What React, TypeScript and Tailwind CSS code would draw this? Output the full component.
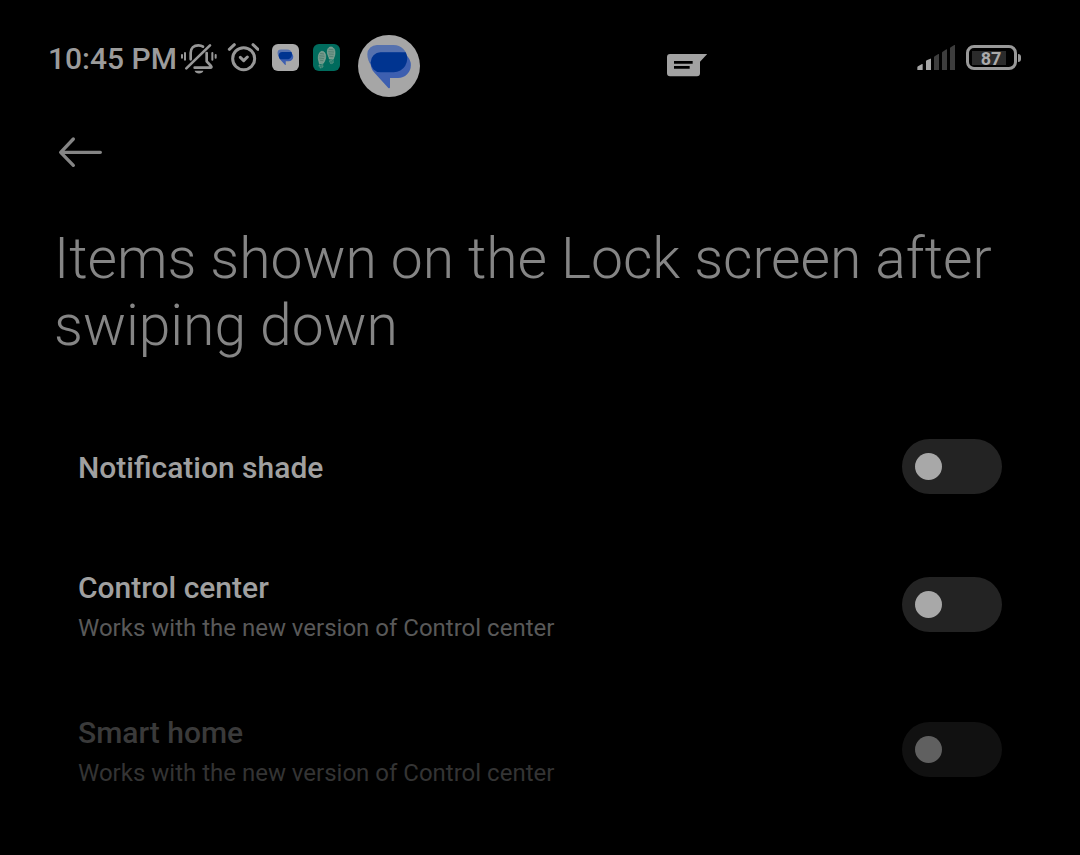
import React from "react";

type Setting = {
  id: string;
  label: string;
  description?: string;
  disabled?: boolean;
};

const settings: Setting[] = [
  { id: "notification-shade", label: "Notification shade" },
  {
    id: "control-center",
    label: "Control center",
    description: "Works with the new version of Control center",
  },
  {
    id: "smart-home",
    label: "Smart home",
    description: "Works with the new version of Control center",
    disabled: true,
  },
];

function VibrateMutedIcon() {
  return (
    <svg className="size-9" viewBox="9 3 108 108" fill="none" stroke="#979797" strokeWidth="8" strokeLinecap="round" strokeLinejoin="round" aria-hidden="true">
      <path d="M12 48v8M21 42v20M103 42v20M113 48v8" strokeWidth="6" />
      <path d="M38 61V42c0-15 10-23 23-23 6 0 10 1 14 4" />
      <path d="M86 42v25l13 14c3 4 1 5-2 5H50" />
      <path d="M25 88 96 19" />
      <path d="M50 95h26c-2 11-24 11-26 0z" fill="#979797" stroke="none" />
    </svg>
  );
}

function AlarmIcon() {
  return (
    <svg className="size-8" viewBox="22 51 96 96" fill="none" stroke="#979797" strokeWidth="9" strokeLinecap="round" strokeLinejoin="round" aria-hidden="true">
      <circle cx="72" cy="101" r="33" />
      <path d="m29 73 15-14M100 59l15 14M62 97l10 10 11-11" />
    </svg>
  );
}

function Bubble() {
  return (
    <>
      <path d="M66 38H115a41 41 0 0 1 0 82H76C54 114 36 90 36 66a29 28 0 0 1 30-28z" fill="#5571ae" />
      <path d="M77 60H128a38.500 38.500 0 0 1 0 77H104v28c0 3-2 4-5 2L56 120c-6-7-10-17-10-28a31 32 0 0 1 31-32z" fill="#3d5fb0" />
      <path d="M76 60H151A41 41 0 0 1 115 120H76a30 30 0 0 1 0-60z" fill="#003490" />
    </>
  );
}

function MessagesAppIcon() {
  return (
    <svg className="size-[27px] rounded-md bg-[#a9a9a9]" viewBox="-10 -7 224 224" aria-hidden="true">
      <Bubble />
    </svg>
  );
}

function FootstepsAppIcon() {
  return (
    <svg className="size-[27px] rounded-md bg-[#006b5d]" viewBox="279 57 81 81" fill="#72978a" stroke="#a6b8a7" strokeWidth="1.5" aria-hidden="true">
      <path d="M305 79c8-1 13 8 12 19-1 7-4 12-7 17l-12 1c-1-7-4-13-3-21 1-9 5-15 10-16z" />
      <path d="M331 66c9-1 14 7 14 17 0 9-3 13-5 20l-12-1c-1-7-6-13-6-21 0-9 3-14 9-15z" />
      <path d="M297 120l12-1c2 6-2 10-6 10s-7-4-6-9zM329 106l11 1c1 6-2 10-6 9-4 0-6-5-5-10z" fill="#337f70" strokeDasharray="3 2" />
      <path d="m300 85 12 2m-14 5 15 2m-15 5 14 2m-12 5 10 1M326 73l14 1m-15 6 17 1m-16 6 15 1m-13 6 12 1" stroke="#386f5f" fill="none" />
    </svg>
  );
}

function ChatIcon() {
  return (
    <svg className="h-6 w-10" viewBox="51 54 120 72" aria-hidden="true">
      <path d="M60 57h112l-22 23v35q0 9-9 9H60q-9 0-9-9V66q0-9 9-9z" fill="#a2a2a2" />
      <path d="M72 82h56M72 97h47" stroke="#000" strokeWidth="8" />
    </svg>
  );
}

function SignalIcon() {
  return (
    <svg className="h-[25px] w-[38px]" viewBox="51 30 114 75" aria-label="Signal strength 2 of 5" role="img">
      <path d="M52 97q0-2 2-3l12-7q2-1 2 1v17H52zM78 79q0-2 2-3l11-5q2-1 2 1v33H78z" fill="#a5a5a5" />
      <path d="M102 67q0-2 2-3l11-7q2-1 2 1v47h-15zM126 53q0-2 2-3l11-7q2-1 2 1v61h-15zM150 40q0-2 2-3l11-7q2-1 2 1v74h-15z" fill="#3d3d3d" />
    </svg>
  );
}

function Battery({ level }: { level: number }) {
  return (
    <div className="flex items-center gap-px" role="img" aria-label={`Battery ${level}%`}>
      <div className="flex h-[25px] w-[51px] rounded-lg border-[3px] border-[#999] p-[3px]">
        <div className="h-[14px] w-[34px] bg-[#2b2b2b]">
          <span className="block pl-1 text-center text-[18px]/[16px] font-bold text-[#aaa]">{level}</span>
        </div>
      </div>
      <div className="h-2 w-[3px] rounded-r-sm bg-[#999]" />
    </div>
  );
}

function StatusBar() {
  return (
    <div className="flex items-start pr-[59px] pl-12">
      <div className="flex h-[45px] items-center">
        <time className="pt-0.5 text-[30px]/[35px] font-medium whitespace-nowrap text-[#9b9b9b]">10:45 PM</time>
        <div className="ml-1 flex items-center gap-[13px]">
          <div className="flex items-center gap-2.5">
            <VibrateMutedIcon />
            <AlarmIcon />
          </div>
          <div className="flex items-center gap-3.5">
            <MessagesAppIcon />
            <FootstepsAppIcon />
          </div>
        </div>
      </div>
      <svg className="ml-[18px] size-[62px] shrink-0 rounded-full bg-[#a6a6a6]" viewBox="8 8 186 186" aria-hidden="true">
        <Bubble />
      </svg>
      <div className="flex h-[60px] flex-1 items-center justify-center pl-[38px]">
        <ChatIcon />
      </div>
      <div className="flex h-[45px] items-center gap-[11px]">
        <SignalIcon />
        <Battery level={87} />
      </div>
    </div>
  );
}

function SettingRow({ id, label, description, disabled }: Setting) {
  return (
    <li className="flex min-h-[131px] items-center justify-between gap-6 py-[34px]">
      <div className="pt-0.5">
        <label
          htmlFor={id}
          className={`block text-[30px]/[40px] font-medium ${disabled ? "text-[#3a3a3a]" : "text-[#a0a0a0]"}`}
        >
          {label}
        </label>
        {description && (
          <p
            id={`${id}-description`}
            className={`mt-[5px] text-[24px]/[30px] ${disabled ? "text-[#343434]" : "text-[#595959]"}`}
          >
            {description}
          </p>
        )}
      </div>
      <input
        id={id}
        type="checkbox"
        role="switch"
        disabled={disabled}
        aria-describedby={description ? `${id}-description` : undefined}
        className="flex h-[55px] w-[100px] shrink-0 cursor-pointer appearance-none items-center rounded-full bg-[#232323] px-[13px] transition-colors before:size-[27px] before:rounded-full before:bg-[#a8a8a8] before:transition-transform before:content-[''] checked:bg-[#0d5cab] checked:before:translate-x-[47px] disabled:cursor-default disabled:bg-[#111] disabled:before:bg-[#606060]"
      />
    </li>
  );
}

export default function App() {
  return (
    <div className="min-h-screen bg-black pt-[35px] font-['Roboto',sans-serif]">
      <StatusBar />
      <main>
        <header className="px-[54px] pt-[35px]">
          <button type="button" aria-label="Back" className="block cursor-pointer py-1">
            <svg className="h-8 w-12" viewBox="42 48 144 96" fill="none" stroke="#858585" strokeWidth="10" strokeLinecap="round" strokeLinejoin="round" aria-hidden="true">
              <path d="M62 97h119M100 57 62 97l38 39" />
            </svg>
          </button>
          <h1 className="pt-[53px] text-[57px]/[67px] font-light text-[#858585]">
            Items shown on the Lock screen after swiping down
          </h1>
        </header>
        <ul className="mt-[42px] px-[78px]">
          {settings.map((setting) => (
            <SettingRow key={setting.id} {...setting} />
          ))}
        </ul>
      </main>
    </div>
  );
}
